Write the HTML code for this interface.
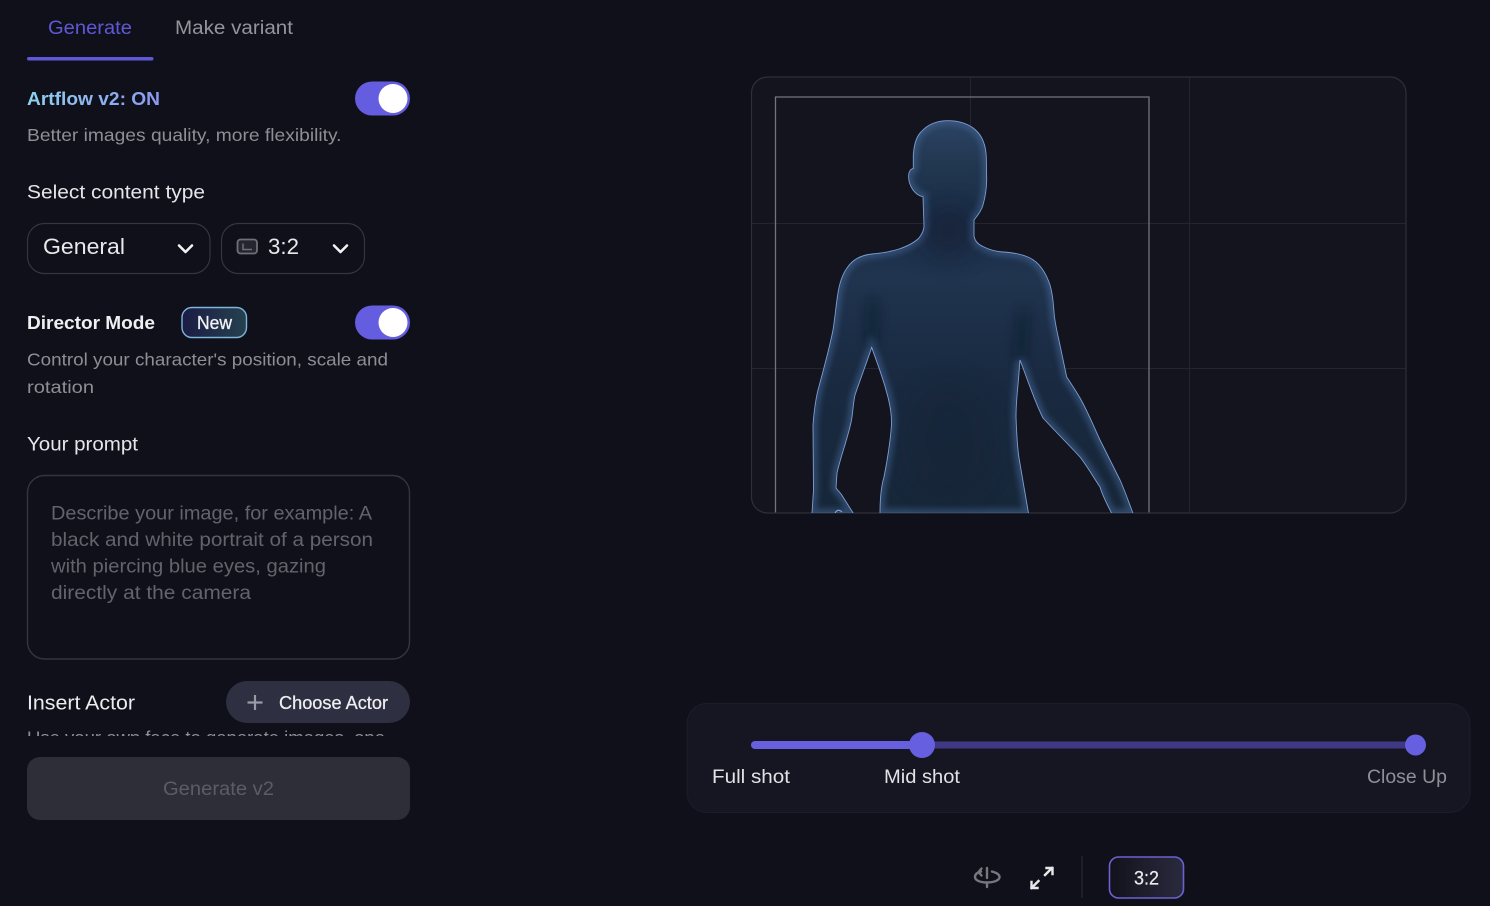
<!DOCTYPE html>
<html lang="en">
<head>
<meta charset="utf-8">
<title>Generate</title>
<style>
html,body{margin:0;padding:0;background:#0f1019;width:1490px;height:906px;overflow:hidden}
svg{display:block;position:absolute;left:0;top:0;filter:blur(.3px)}
text{font-family:"Liberation Sans",sans-serif}
</style>
</head>
<body>
<svg width="1490" height="906" viewBox="0 0 1490 906" xmlns="http://www.w3.org/2000/svg">
<defs>
<linearGradient id="ag" gradientUnits="userSpaceOnUse" x1="27" y1="0" x2="160" y2="0"><stop offset="0" stop-color="#8fd3ef"/><stop offset="1" stop-color="#8b98f0"/></linearGradient>
<linearGradient id="nb" x1="0" y1="0" x2="1" y2="0"><stop offset="0" stop-color="#1b1c44"/><stop offset="1" stop-color="#25414f"/></linearGradient>
<linearGradient id="rb" x1="0" y1="0" x2="1" y2="0"><stop offset="0" stop-color="#12121c"/><stop offset="1" stop-color="#2a2a3e"/></linearGradient>
<linearGradient id="bf" gradientUnits="userSpaceOnUse" x1="0" y1="120" x2="0" y2="513"><stop offset="0" stop-color="#2c4465"/><stop offset=".12" stop-color="#21364f"/><stop offset=".26" stop-color="#1a2d47"/><stop offset=".4" stop-color="#20344f"/><stop offset=".65" stop-color="#192a41"/><stop offset="1" stop-color="#172739"/></linearGradient>
<path id="body" d="M948,120.700 C958,120.700 968,123.500 975,129.500 C982,135.500 985.800,145 986.300,157 L986.700,180 C986.500,190 985,198 983,205 C981,212 977,216 974,220 L974,236 C975,242 979,245 984,247 C990,250 996,251.500 1003,252 C1012,252.500 1022,254 1030,258 C1040,263 1046,273 1050,285 C1053,295 1053.500,305 1054,312 C1055,325 1058,335 1061,350 L1066.700,377 C1072,385 1076,391 1080,398 C1087,410 1094,427 1100,440 L1120,480 C1125,491 1129,503 1133,513.300 L1111.700,513.300 C1108,506 1103,497 1100,487 C1094,478 1087,466 1080,457 C1068,444 1055,431 1043,418 C1034,400 1027,378 1020,360 L1018,385 C1017,395 1016,405 1016,417 C1016.500,430 1017,445 1019,458 L1028.500,513.300 L880,513.300 C880,500 881,487 884,477 C887,462 890,445 891.500,425 C892,412 889,400 886,390 C882,375 876,360 871.700,347.300 C867,362 860,380 855,395 C853,404 853,412 851.500,420 C848,438 841,455 837,473 L836,488 C839,492 841,493 843,497 L853.300,513.300 L812,513.300 L813.500,490 L813,425 C814,412 815,402 818,390 C824,368 829,350 833,330 C835,318 836,305 837.500,296 C839,285 842,275 847,268 C853,259 862,255 872,254 C882,253 890,252 899,249 C908,246 914,243 919,238 C922,234 924,230 924,226 L923,196.700 C919,196 916,194 913,190 C909,184 908,178 909,173 C910,170 911,169 913.300,168.500 L913.300,155 C914,145 916,137 921,132 C928,124 938,120.700 948,120.700 Z"/>
<clipPath id="bc"><use href="#body"/></clipPath>
<clipPath id="pc"><rect x="751" y="77" width="655" height="436"/></clipPath>
<clipPath id="tc"><rect x="20" y="700" width="395" height="36"/></clipPath>
<filter id="b3" filterUnits="userSpaceOnUse" x="750" y="70" width="460" height="480"><feGaussianBlur stdDeviation="3"/></filter>
<filter id="b6" filterUnits="userSpaceOnUse" x="750" y="70" width="460" height="480"><feGaussianBlur stdDeviation="6"/></filter>
<filter id="b12" filterUnits="userSpaceOnUse" x="750" y="70" width="460" height="480"><feGaussianBlur stdDeviation="12"/></filter>
</defs>

<rect width="1490" height="906" fill="#0f1019"/>

<!-- Tabs -->
<text x="48" y="34" font-size="19" fill="#5f58d6" textLength="84" lengthAdjust="spacingAndGlyphs">Generate</text>
<text x="175" y="34" font-size="19" fill="#94949c" textLength="118" lengthAdjust="spacingAndGlyphs">Make variant</text>
<rect x="27" y="57" width="126.500" height="3.500" rx="1.700" fill="#5f58d8"/>

<!-- Artflow -->
<text x="27" y="105" font-size="18" font-weight="700" fill="url(#ag)" textLength="133" lengthAdjust="spacingAndGlyphs">Artflow v2: ON</text>
<rect x="355" y="81.500" width="55" height="34" rx="17" fill="#655ddf"/>
<circle cx="393" cy="98.500" r="14.500" fill="#fff"/>
<text x="27" y="141" font-size="17.500" fill="#8e8e95" textLength="314.500" lengthAdjust="spacingAndGlyphs">Better images quality, more flexibility.</text>

<!-- Content type -->
<text x="27" y="198.500" font-size="19.500" fill="#e6e6ea" textLength="178" lengthAdjust="spacingAndGlyphs">Select content type</text>
<rect x="27.500" y="223.500" width="182.500" height="50" rx="17" fill="none" stroke="#34353f" stroke-width="1.200"/>
<text x="43" y="254" font-size="22.500" fill="#e8e8ea" textLength="82" lengthAdjust="spacingAndGlyphs">General</text>
<path d="M179,245.500 L185.500,252 L192,245.500" fill="none" stroke="#f2f2f4" stroke-width="2.600" stroke-linecap="round" stroke-linejoin="round"/>
<rect x="221.500" y="223.500" width="143" height="50" rx="17" fill="none" stroke="#34353f" stroke-width="1.200"/>
<rect x="237.500" y="239.500" width="19.500" height="14" rx="3" fill="#24252f" stroke="#6f6f78" stroke-width="1.800"/>
<path d="M243,243.500 V249.500 H252" fill="none" stroke="#6f6f78" stroke-width="1.500"/>
<text x="268" y="254" font-size="22" fill="#e8e8ea" textLength="31" lengthAdjust="spacingAndGlyphs">3:2</text>
<path d="M334,245.500 L340.500,252 L347,245.500" fill="none" stroke="#f2f2f4" stroke-width="2.600" stroke-linecap="round" stroke-linejoin="round"/>

<!-- Director -->
<text x="27" y="329" font-size="18" font-weight="700" fill="#f0f0f2" textLength="128" lengthAdjust="spacingAndGlyphs">Director Mode</text>
<rect x="182" y="307.500" width="64.500" height="30" rx="10" fill="url(#nb)" stroke="#7fb4dc" stroke-width="1.400"/>
<text x="197" y="329" font-size="18" fill="#f2f2f4" stroke="#f2f2f4" stroke-width=".3" textLength="35" lengthAdjust="spacingAndGlyphs">New</text>
<rect x="355" y="305.500" width="55" height="34" rx="17" fill="#655ddf"/>
<circle cx="393" cy="322.500" r="14.500" fill="#fff"/>
<text x="27" y="365.500" font-size="17.500" fill="#8e8e95" textLength="361" lengthAdjust="spacingAndGlyphs">Control your character's position, scale and</text>
<text x="27" y="393" font-size="17.500" fill="#8e8e95" textLength="67" lengthAdjust="spacingAndGlyphs">rotation</text>

<!-- Prompt -->
<text x="27" y="450.500" font-size="19.500" fill="#e6e6ea" textLength="111" lengthAdjust="spacingAndGlyphs">Your prompt</text>
<rect x="27.500" y="475.500" width="382" height="183.500" rx="17" fill="none" stroke="#34353f" stroke-width="1.400"/>
<text x="51" y="519.500" font-size="19" fill="#63636b" textLength="321" lengthAdjust="spacingAndGlyphs">Describe your image, for example: A</text>
<text x="51" y="546" font-size="19" fill="#63636b" textLength="322" lengthAdjust="spacingAndGlyphs">black and white portrait of a person</text>
<text x="51" y="572.500" font-size="19" fill="#63636b" textLength="275" lengthAdjust="spacingAndGlyphs">with piercing blue eyes, gazing</text>
<text x="51" y="599" font-size="19" fill="#63636b" textLength="200" lengthAdjust="spacingAndGlyphs">directly at the camera</text>

<!-- Actor -->
<text x="27" y="709.500" font-size="20" fill="#ececef" textLength="108" lengthAdjust="spacingAndGlyphs">Insert Actor</text>
<rect x="226" y="681" width="184" height="42" rx="21" fill="#2e2f40"/>
<path d="M255,695 V710 M247.500,702.500 H262.500" stroke="#9a9aa6" stroke-width="2.200"/>
<text x="279" y="709" font-size="18" fill="#efeff2" stroke="#efeff2" stroke-width=".25" textLength="109" lengthAdjust="spacingAndGlyphs">Choose Actor</text>
<g clip-path="url(#tc)"><text x="27" y="743.500" font-size="17.500" fill="#8e8e95" textLength="358" lengthAdjust="spacingAndGlyphs">Use your own face to generate images, one</text></g>
<rect x="27" y="757" width="383" height="63" rx="13" fill="#2d2e38"/>
<text x="163" y="795" font-size="19" fill="#5c5c66" textLength="111" lengthAdjust="spacingAndGlyphs">Generate v2</text>

<!-- Canvas -->
<rect x="751.500" y="77" width="654.500" height="436" rx="16" fill="#13141e"/>
<path d="M970.500,77 V513 M1189.500,77 V513 M751,223.500 H1406 M751,368.500 H1406" fill="none" stroke="#24252f" stroke-width="1"/>
<path d="M775.500,513 V97 H1149 V513" fill="none" stroke="#73747d" stroke-width="1.300"/>
<rect x="751.500" y="77" width="654.500" height="436" rx="16" fill="none" stroke="#2e2f3a" stroke-width="1.200"/>

<g clip-path="url(#pc)">
<use href="#body" fill="url(#bf)"/>
<g clip-path="url(#bc)">
<use href="#body" fill="none" stroke="#47699a" stroke-width="9" opacity=".5" filter="url(#b3)"/>
<ellipse cx="949" cy="232" rx="24" ry="26" fill="#121f32" opacity=".55" filter="url(#b12)"/>
<path d="M873,300 L872,345 M1024,310 L1020,358" stroke="#0b1624" stroke-width="7" opacity=".7" fill="none" filter="url(#b6)"/>
<ellipse cx="950" cy="440" rx="45" ry="60" fill="#132133" opacity=".3" filter="url(#b12)"/>
</g>
<use href="#body" fill="none" stroke="#7c9fd2" stroke-width=".9"/>
<path d="M835,513 Q838,508 842,512" fill="none" stroke="#8aaede" stroke-width="1"/>
</g>

<!-- Slider panel -->
<rect x="687" y="703.500" width="783" height="109" rx="20" fill="#151621" stroke="#1c1d29" stroke-width="1"/>
<rect x="751" y="741.500" width="664" height="7" rx="3.500" fill="#3f3884"/>
<rect x="751" y="741" width="171" height="8" rx="4" fill="#665fe0"/>
<circle cx="922" cy="745" r="13" fill="#665fe0"/>
<circle cx="1415.500" cy="745" r="10.500" fill="#665fe0"/>
<text x="712" y="783" font-size="19" fill="#e2e2e6" textLength="78" lengthAdjust="spacingAndGlyphs">Full shot</text>
<text x="884" y="783" font-size="19" fill="#e2e2e6" textLength="76" lengthAdjust="spacingAndGlyphs">Mid shot</text>
<text x="1367" y="783" font-size="19" fill="#8f8f97" textLength="80" lengthAdjust="spacingAndGlyphs">Close Up</text>

<!-- Bottom toolbar -->
<g fill="none" stroke="#77777f" stroke-width="2.400" stroke-linecap="round" stroke-linejoin="round">
<path d="M987,868 V878 M987,883 V887"/>
<path d="M981,871.500 C977,872.500 975,874.500 975,877 C975,880.500 980.500,882.500 987,882.500 C993.500,882.500 999.500,880.500 999.500,877 C999.500,874.500 996,872.500 992,871.500"/>
<path d="M981.500,868.500 L978.500,872 L981.500,875.500"/>
</g>
<g fill="none" stroke="#e8e8ea" stroke-width="2.400" stroke-linecap="square">
<path d="M1045,875 L1052,868 M1046.500,868 H1052.500 V874"/>
<path d="M1038.500,881 L1031.500,888 M1031.500,882 V888 H1037.500"/>
</g>
<path d="M1082,856 V898" stroke="#24252f" stroke-width="1.500"/>
<rect x="1109.500" y="857" width="74" height="41" rx="9" fill="url(#rb)" stroke="#6a62d0" stroke-width="1.600"/>
<text x="1134" y="884.500" font-size="19" fill="#ececef" stroke="#ececef" stroke-width=".2" textLength="25" lengthAdjust="spacingAndGlyphs">3:2</text>
</svg>
</body>
</html>
